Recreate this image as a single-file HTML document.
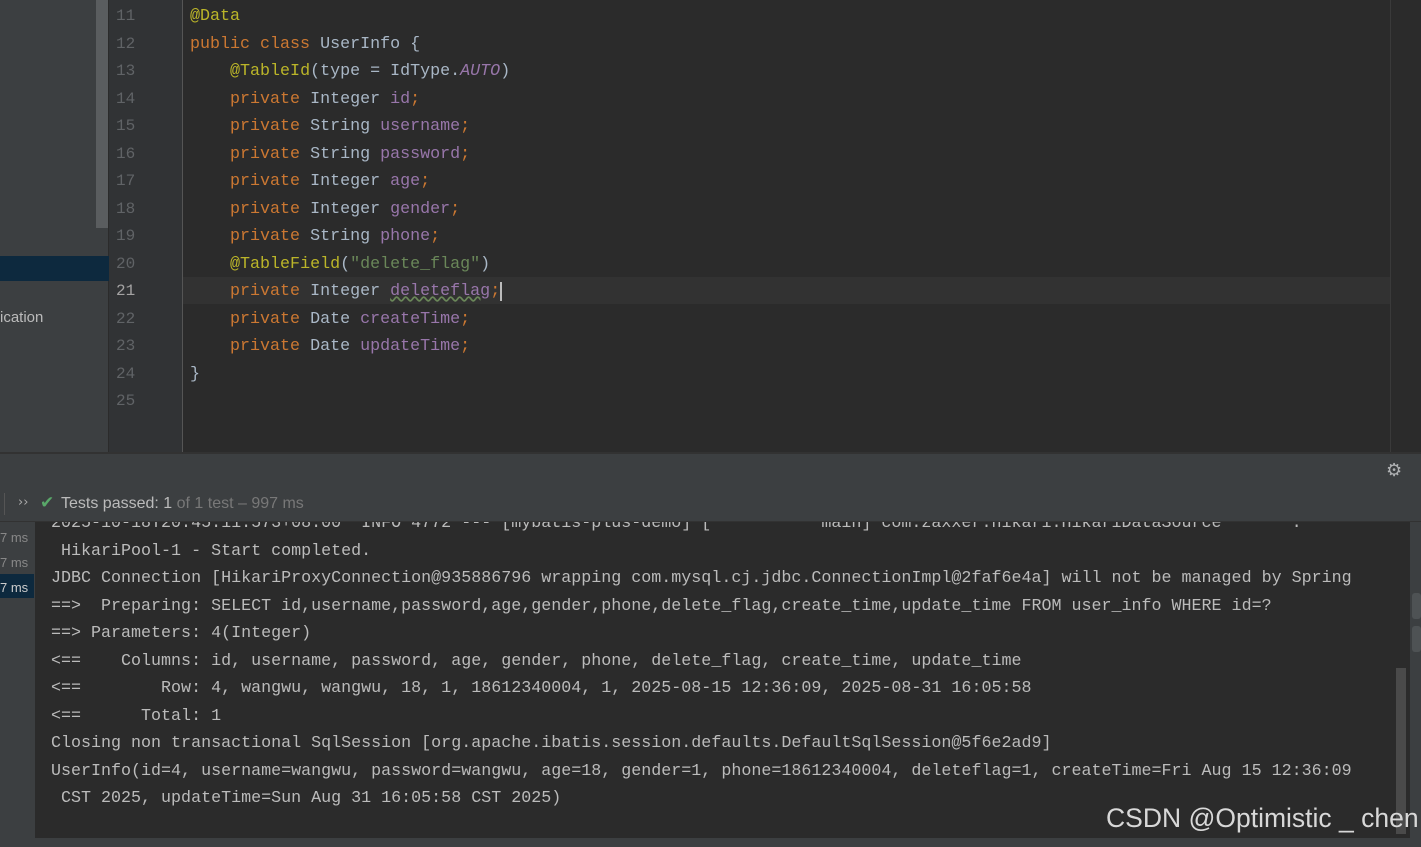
<!DOCTYPE html>
<html><head><meta charset="utf-8"><style>
*{margin:0;padding:0;box-sizing:border-box}
body{width:1421px;height:847px;overflow:hidden;background:#2b2b2b;position:relative;font-family:"Liberation Mono",monospace}
.abs{position:absolute}
.code{font-size:16.68px;line-height:27.5px;white-space:pre;color:#a9b7c6}
.k{color:#cc7832}.a{color:#bbb529}.f{color:#9876aa}.s{color:#6a8759}.i{color:#9876aa;font-style:italic}
.ln{color:#606366;font-size:16px;line-height:27.5px;white-space:pre;text-align:left}
.con{font-size:16.68px;line-height:27.5px;white-space:pre;color:#bbbbbb}
</style></head><body>
<div class="abs" style="left:0;top:0;width:96px;height:452px;background:#3c3f41"></div>
<div class="abs" style="left:96px;top:0;width:12px;height:228px;background:#5a5d5f"></div>
<div class="abs" style="left:96px;top:228px;width:12px;height:224px;background:#3c3f41"></div>
<div class="abs" style="left:0;top:256px;width:109px;height:25px;background:#0d293e"></div>
<div class="abs" style="left:0;top:309px;font-family:'Liberation Sans',sans-serif;font-size:15px;color:#bbbbbb">ication</div>
<div class="abs" style="left:109px;top:0;width:74px;height:452px;background:#313335"></div>
<div class="abs" style="left:182px;top:0;width:1px;height:452px;background:#555"></div>
<div class="abs" style="left:183px;top:277px;width:1207px;height:27px;background:#323232"></div>
<div class="abs" style="left:1390px;top:0;width:1px;height:452px;background:#3a3a3a"></div>
<div class="abs ln" style="left:116px;top:3px">11
12
13
14
15
16
17
18
19
20
<span style="color:#a4a3a3">21</span>
22
23
24
25</div>
<div class="abs code" style="left:190px;top:3px"><span class="a">@Data</span>
<span class="k">public class </span>UserInfo {
    <span class="a">@TableId</span>(type = IdType.<span class="i">AUTO</span>)
    <span class="k">private </span>Integer <span class="f">id</span><span class="k">;</span>
    <span class="k">private </span>String <span class="f">username</span><span class="k">;</span>
    <span class="k">private </span>String <span class="f">password</span><span class="k">;</span>
    <span class="k">private </span>Integer <span class="f">age</span><span class="k">;</span>
    <span class="k">private </span>Integer <span class="f">gender</span><span class="k">;</span>
    <span class="k">private </span>String <span class="f">phone</span><span class="k">;</span>
    <span class="a">@TableField</span>(<span class="s">"delete_flag"</span>)
    <span class="k">private </span>Integer <span class="f" style="text-decoration:underline wavy #6a8759">deleteflag</span><span class="k">;</span><span style="border-left:2px solid #bbb"></span>
    <span class="k">private </span>Date <span class="f">createTime</span><span class="k">;</span>
    <span class="k">private </span>Date <span class="f">updateTime</span><span class="k">;</span>
}</div>
<div class="abs" style="left:0;top:452px;width:1421px;height:2px;background:#323232"></div>
<div class="abs" style="left:0;top:454px;width:1421px;height:68px;background:#3c3f41"></div>
<div class="abs" style="left:1386px;top:460px;color:#afb1b3;font-size:18px;font-family:'DejaVu Sans',sans-serif">⚙</div>
<div class="abs" style="left:4px;top:493px;width:1px;height:22px;background:#555"></div>
<div class="abs" style="left:18px;top:495px;color:#aaa;font-size:13px;font-family:'DejaVu Sans',sans-serif">››</div>
<div class="abs" style="left:40px;top:493px;color:#59a869;font-size:17px;font-family:'DejaVu Sans',sans-serif">✔</div>
<div class="abs" style="left:61px;top:495px;font-family:'Liberation Sans',sans-serif;font-size:16px;color:#bbbbbb">Tests passed: 1 <span style="color:#787878">of 1 test – 997 ms</span></div>
<div class="abs" style="left:0;top:521px;width:1421px;height:1px;background:#323232"></div>
<div class="abs" style="left:0;top:522px;width:35px;height:316px;background:#3c3f41"></div>
<div class="abs" style="left:0;top:574px;width:34px;height:24px;background:#0d293e"></div>
<div class="abs" style="left:0;top:525px;font-family:'Liberation Sans',sans-serif;font-size:13px;line-height:25px;color:#888">7 ms<br>7 ms<br><span style="color:#ccc">7 ms</span></div>
<div class="abs" style="left:35px;top:522px;width:1375px;height:316px;background:#2b2b2b;overflow:hidden">
<div class="abs con" style="left:16px;top:-12px">2025-10-18T20:45:11.573+08:00  INFO 4772 --- [mybatis-plus-demo] [           main] com.zaxxer.hikari.HikariDataSource       :
 HikariPool-1 - Start completed.
JDBC Connection [HikariProxyConnection@935886796 wrapping com.mysql.cj.jdbc.ConnectionImpl@2faf6e4a] will not be managed by Spring
==>  Preparing: SELECT id,username,password,age,gender,phone,delete_flag,create_time,update_time FROM user_info WHERE id=?
==> Parameters: 4(Integer)
&lt;==    Columns: id, username, password, age, gender, phone, delete_flag, create_time, update_time
&lt;==        Row: 4, wangwu, wangwu, 18, 1, 18612340004, 1, 2025-08-15 12:36:09, 2025-08-31 16:05:58
&lt;==      Total: 1
Closing non transactional SqlSession [org.apache.ibatis.session.defaults.DefaultSqlSession@5f6e2ad9]
UserInfo(id=4, username=wangwu, password=wangwu, age=18, gender=1, phone=18612340004, deleteflag=1, createTime=Fri Aug 15 12:36:09
 CST 2025, updateTime=Sun Aug 31 16:05:58 CST 2025)</div>
</div>
<div class="abs" style="left:1396px;top:668px;width:10px;height:166px;background:#4a4a4a"></div>
<div class="abs" style="left:1410px;top:522px;width:11px;height:316px;background:#3c3f41"></div>
<div class="abs" style="left:1412px;top:593px;width:9px;height:26px;background:#4e5254;border-radius:3px"></div>
<div class="abs" style="left:1412px;top:626px;width:9px;height:26px;background:#4e5254;border-radius:3px"></div>
<div class="abs" style="left:1106px;top:803px;font-family:'Liberation Sans',sans-serif;font-size:26.5px;color:#d8d8d8;white-space:nowrap">CSDN @Optimistic _ chen</div>
<div class="abs" style="left:0;top:838px;width:1421px;height:9px;background:#3c3f41"></div>
</body></html>
